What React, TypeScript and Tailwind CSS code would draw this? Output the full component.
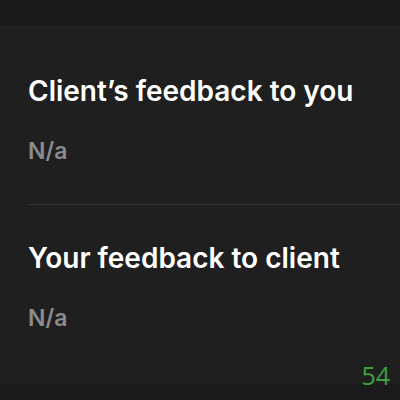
export default function App() {
  return (
    <div className="w-[400px] h-[400px] bg-[#1f1f1f] flex flex-col overflow-hidden" style={{ fontFamily: 'Inter, "Liberation Sans", sans-serif' }}>
      <div className="h-[25px] bg-[#181818] shrink-0" />
      <div className="flex-1 flex flex-col pl-[28px]">
        <div className="mt-[52px] text-[28px] leading-[28px] font-semibold text-white tracking-[0px]">Client’s feedback to you</div>
        <div className="mt-[34px] text-[23px] leading-[24px] font-semibold text-[#8c8c8c]">N/a</div>
        <div className="mt-[41px] h-px bg-[#363636]" />
        <div className="mt-[39px] text-[28px] leading-[28px] font-semibold text-white tracking-[0px]">Your feedback to client</div>
        <div className="mt-[34px] text-[23px] leading-[24px] font-semibold text-[#8c8c8c]">N/a</div>
      </div>
      <div className="h-[16px] bg-[#1a1a1a] shrink-0 relative">
        <span className="absolute right-[10px] bottom-[12px] text-[25px] leading-none text-[#3f9f3f]" style={{ fontFamily: '"Open Sans", sans-serif' }}>54</span>
      </div>
    </div>
  );
}
